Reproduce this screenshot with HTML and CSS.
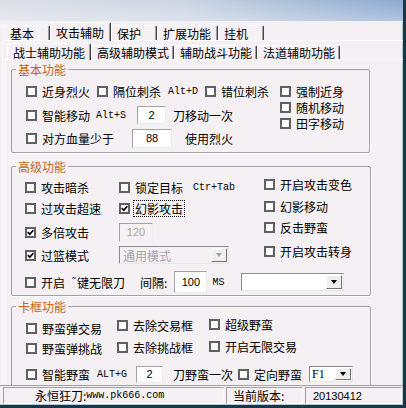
FILE: index.html
```html
<!DOCTYPE html>
<html lang="zh-CN">

<head>
    <meta charset="UTF-8">
    <meta name="viewport" content="width=device-width, initial-scale=1.0">
    <title>攻击辅助</title>

    <link rel="stylesheet" href="styles.css">

</head>

<body>

    <div class="window">
        <div class="titlebar"></div>

        <!-- main tabs -->
        <div class="tabs main-tabs">
            <span class="tab">基本</span>
            <span class="tab active">攻击辅助</span>
            <span class="tab">保护</span>
            <span class="tab">扩展功能</span>
            <span class="tab">挂机</span>
        </div>

        <div class="page">
            <!-- sub tabs -->
            <div class="tabs sub-tabs">
                <span class="tab active">战士辅助功能</span>
                <span class="tab">高级辅助模式</span>
                <span class="tab">辅助战斗功能</span>
                <span class="tab">法道辅助功能</span>
            </div>

            <div class="subpage">

                <!-- 基本功能 -->
                <div class="group g1">
                    <span class="caption">基本功能</span>
                    <div class="left">
                        <div class="row">
                            <span class="check"><i class="box"></i>近身烈火</span>
                            <span class="check ml7"><i class="box"></i>隔位刺杀</span>
                            <span class="key ml7">Alt+D</span>
                            <span class="check ml7"><i class="box"></i>错位刺杀</span>
                        </div>
                        <div class="row r2">
                            <span class="check"><i class="box"></i>智能移动</span>
                            <span class="key ml6">Alt+S</span>
                            <span class="field f-move">2</span>
                            <span class="ml7">刀移动一次</span>
                        </div>
                        <div class="row r3">
                            <span class="check"><i class="box"></i>对方血量少于</span>
                            <span class="field f-hp">88</span>
                            <span class="ml13">使用烈火</span>
                        </div>
                    </div>
                    <div class="right">
                        <span class="check"><i class="box"></i>强制近身</span>
                        <span class="check"><i class="box"></i>随机移动</span>
                        <span class="check"><i class="box"></i>田字移动</span>
                    </div>
                </div>

                <!-- 高级功能 -->
                <div class="group g2">
                    <span class="caption">高级功能</span>
                    <div class="top">
                        <div class="left">
                            <div class="row">
                                <span class="check col1"><i class="box"></i>攻击暗杀</span>
                                <span class="check"><i class="box"></i>锁定目标</span>
                                <span class="key ml10">Ctr+Tab</span>
                            </div>
                            <div class="row r2">
                                <span class="check col1"><i class="box"></i>过攻击超速</span>
                                <span class="check"><i class="box on"><svg viewBox="0 0 7 7"><path d="M0.8 3.2 L2.7 5.2 L6.3 1.2"/></svg></i><span class="focus">幻影攻击</span></span>
                            </div>
                            <div class="row r3">
                                <span class="check col1"><i class="box on"><svg viewBox="0 0 7 7"><path d="M0.8 3.2 L2.7 5.2 L6.3 1.2"/></svg></i>多倍攻击</span>
                                <span class="field off f-multi">120</span>
                            </div>
                            <div class="row r4">
                                <span class="check col1"><i class="box on"><svg viewBox="0 0 7 7"><path d="M0.8 3.2 L2.7 5.2 L6.3 1.2"/></svg></i>过篮模式</span>
                                <span class="combo off c-mode"><span class="value">通用模式</span><span class="arrow"></span></span>
                            </div>
                        </div>
                        <div class="right">
                            <span class="check"><i class="box"></i>开启攻击变色</span>
                            <span class="check"><i class="box"></i>幻影移动</span>
                            <span class="check"><i class="box"></i>反击野蛮</span>
                            <span class="check"><i class="box"></i>开启攻击转身</span>
                        </div>
                    </div>
                    <div class="row r5">
                        <span class="check"><i class="box"></i>开启<span class="key"> ˜</span>键无限刀</span>
                        <span class="ml15">间隔:</span>
                        <span class="field f-gap">100</span>
                        <span class="key ml5">MS</span>
                        <span class="combo c-empty"><span class="value"></span><span class="arrow"></span></span>
                    </div>
                </div>

                <!-- 卡框功能 -->
                <div class="group g3">
                    <span class="caption">卡框功能</span>
                    <div class="cols">
                        <div class="col c1">
                            <span class="check"><i class="box"></i>野蛮弹交易</span>
                            <span class="check"><i class="box"></i>野蛮弹挑战</span>
                        </div>
                        <div class="col c2">
                            <span class="check"><i class="box"></i>去除交易框</span>
                            <span class="check"><i class="box"></i>去除挑战框</span>
                        </div>
                        <div class="col c3">
                            <span class="check"><i class="box"></i>超级野蛮</span>
                            <span class="check"><i class="box"></i>开启无限交易</span>
                        </div>
                    </div>
                    <div class="row r6">
                        <span class="check"><i class="box"></i>智能野蛮</span>
                        <span class="key ml7">ALT+G</span>
                        <span class="field f-count">2</span>
                        <span class="ml10">刀野蛮一次</span>
                        <span class="check ml5"><i class="box"></i>定向野蛮</span>
                        <span class="combo c-key"><span class="value">F1</span><span class="arrow"></span></span>
                    </div>
                </div>

            </div>
        </div>

        <!-- status bar -->
        <div class="statusbar">
            <span class="cell s1">永恒狂刀:<span class="key">www.pk666.com</span></span>
            <span class="cell s2">当前版本:</span>
            <span class="cell s3">20130412</span>
        </div>
    </div>

</body>

</html>
```

FILE: styles.css
```css
* {
    box-sizing: border-box;
}

body {
    margin: 0;
    background: #f4f0f3;
    font-family: "Noto Sans CJK SC", "Liberation Sans", sans-serif;
    font-size: 12px;
    color: #000;
}

.window {
    width: 406px;
    height: 408px;
    display: flex;
    flex-direction: column;
    overflow: hidden;
    background: #f4f0f3;
    border-right: 3px solid #1b3545;
    border-bottom: 3px solid #1b3545;
    box-shadow: inset -1px -1px 0 #a9cbe2;
}

.titlebar {
    flex: none;
    height: 22px;
    background:
        linear-gradient(to bottom, rgba(255, 255, 255, 0.05), rgba(255, 255, 255, 0.35)),
        linear-gradient(to right, #dadde4 0%, #c9d3e1 45%, #86a4ce 100%);
    border-bottom: 1px solid #eef2f6;
}

/* tabs */
.tabs {
    flex: none;
    display: flex;
    align-items: flex-end;
}

.tab {
    position: relative;
    display: flex;
    align-items: center;
    background: #f4f0f3;
    border: 1px solid #fff;
    border-bottom: none;
    border-right-color: #404040;
    border-radius: 2px 2px 0 0;
    box-shadow: inset -1px 0 #a0a0a0;
    white-space: nowrap;
}

.tab.active {
    z-index: 1;
    margin-bottom: -1px;
}

.main-tabs {
    height: 18px;
    padding-left: 4px;
}

.main-tabs .tab {
    height: 15px;
    min-width: 46px;
    padding: 0 6px 0 5px;
}

.main-tabs .tab.active {
    height: 19px;
}

.page {
    flex: 1;
    min-height: 0;
    display: flex;
    flex-direction: column;
    margin-left: 2px;
    padding-left: 2px;
    border-top: 1px solid #fff;
    border-left: 1px solid #fff;
}

.sub-tabs {
    height: 18px;
    padding-left: 2px;
}

.sub-tabs .tab {
    height: 14px;
    padding: 0 4px 0 5px;
}

.sub-tabs .tab.active {
    height: 17px;
    padding: 0 5px;
}

.subpage {
    flex: 1;
    min-height: 0;
    overflow: hidden;
    padding: 9px 0 0 5px;
    border-top: 1px solid #fff;
    border-left: 1px solid #fff;
}

/* group boxes */
.group {
    position: relative;
    width: 360px;
    border: 1px solid #a5a1a5;
    border-radius: 2px;
    box-shadow: 1px 1px 0 #fff;
}

.caption {
    position: absolute;
    top: -9px;
    left: 4px;
    padding: 0 2px;
    line-height: 17px;
    background: #f4f0f3;
    color: #c4661f;
}

.row {
    display: flex;
    align-items: center;
    height: 20px;
    white-space: nowrap;
}

.check {
    display: flex;
    align-items: center;
    white-space: nowrap;
}

.box {
    flex: none;
    width: 11px;
    height: 11px;
    margin-right: 5px;
    border: 2px solid #606060;
    background: #fff;
    display: flex;
    align-items: center;
    justify-content: center;
}

.box svg {
    width: 7px;
    height: 7px;
    fill: none;
    stroke: #000;
    stroke-width: 1.7;
}

.focus {
    outline: 1px dotted #000;
    padding: 0 1px;
    margin-left: -1px;
    line-height: 15px;
}

.key {
    font-family: "Liberation Mono", monospace;
    font-size: 10px;
    white-space: pre;
}

.ml5 { margin-left: 5px; }
.ml6 { margin-left: 6px; }
.ml7 { margin-left: 7px; }
.ml10 { margin-left: 10px; }
.ml13 { margin-left: 13px; }
.ml15 { margin-left: 15px; }

/* edit boxes */
.field {
    display: flex;
    align-items: center;
    justify-content: center;
    background: #fff;
    border: 1px solid;
    border-color: #a3a3a3 #ececec #ececec #a3a3a3;
    font-family: "Liberation Sans", sans-serif;
    font-size: 11px;
}

.field.off {
    background: #f4f0f3;
    color: #a6a6a6;
}

.f-move { margin-left: 11px; width: 29px; height: 18px; }
.f-hp { margin-left: 18px; width: 40px; height: 19px; }
.f-multi { width: 34px; height: 19px; }
.f-gap { margin-left: 7px; width: 33px; height: 22px; }
.f-count { margin-left: 9px; width: 27px; height: 17px; }

/* combo boxes */
.combo {
    display: flex;
    align-items: stretch;
    background: #fff;
    border: 1px solid;
    border-color: #8c8c8c #e6e6e6 #e6e6e6 #8c8c8c;
    padding: 1px;
}

.combo .value {
    flex: 1;
    display: flex;
    align-items: center;
    padding-left: 2px;
}

.combo .arrow {
    width: 16px;
    position: relative;
    background: #f1eeee;
    border: 1px solid;
    border-color: #fff #707070 #707070 #fff;
}

.combo .arrow::after {
    content: "";
    position: absolute;
    left: 4px;
    top: 50%;
    margin-top: -2px;
    border: 3px solid transparent;
    border-top: 4px solid #000;
    border-bottom: none;
}

.combo.off {
    background: #f4f0f3;
    color: #a6a6a6;
}

.combo.off .arrow::after {
    border-top-color: #a0a0a0;
}

.c-mode { width: 110px; height: 18px; }
.c-empty { margin-left: 17px; width: 103px; height: 18px; }
.c-key { margin-left: 7px; width: 44px; height: 16px; }

.c-key .value {
    font-family: "Liberation Serif", serif;
    font-size: 12px;
    padding-left: 1px;
}

/* 基本功能 */
.g1 {
    display: flex;
    width: 359px;
    height: 84px;
    padding: 11px 0 0 14px;
}

.g1 .left {
    width: 254px;
}

.g1 .r2 { margin-top: 4px; }
.g1 .r3 { margin-top: 3px; }

.g1 .right {
    display: flex;
    flex-direction: column;
    padding-top: 2px;
}

.g1 .right .check {
    height: 16px;
}

/* 高级功能 */
.g2 {
    margin-top: 13px;
    height: 130px;
    padding: 10px 0 0 13px;
}

.g2 .top {
    display: flex;
}

.g2 .left {
    width: 239px;
}

.g2 .col1 { width: 94px; }
.g2 .r2 { margin-top: 1px; }
.g2 .r3 { margin-top: 4px; }
.g2 .r4 { margin-top: 3px; }
.g2 .r5 { margin-top: 6px; height: 22px; }

.g2 .right {
    display: flex;
    flex-direction: column;
    margin-top: -3px;
}

.g2 .right .check { height: 20px; }
.g2 .right .check:nth-child(2) { margin-top: 2px; }
.g2 .right .check:nth-child(3) { margin-top: 1px; }
.g2 .right .check:nth-child(4) { margin-top: 4px; }

/* 卡框功能 */
.g3 {
    margin-top: 10px;
    height: 100px;
    padding: 8px 0 0 14px;
}

.cols {
    display: flex;
}

.col {
    display: flex;
    flex-direction: column;
}

.col .check { height: 20px; }

.col.c1 { width: 91px; margin-top: 3px; }
.col.c2 { width: 92px; gap: 2px; }
.col.c3 { gap: 2px; margin-top: -1px; }

.g3 .r6 { margin-top: 6px; }

/* status bar */
.statusbar {
    flex: none;
    height: 20px;
    display: flex;
    gap: 2px;
    padding: 1px 0 1px 3px;
    border-top: 1px solid #a0a0a0;
}

.cell {
    display: flex;
    align-items: center;
    border: 1px solid;
    border-color: #a0a0a0 #fff #fff #a0a0a0;
    white-space: nowrap;
}

.s1 { width: 221px; padding-left: 31px; }
.s2 { width: 77px; padding-left: 6px; }
.s3 { width: 97px; padding-left: 7px; font-family: "Liberation Sans", sans-serif; font-size: 11px; }
```
